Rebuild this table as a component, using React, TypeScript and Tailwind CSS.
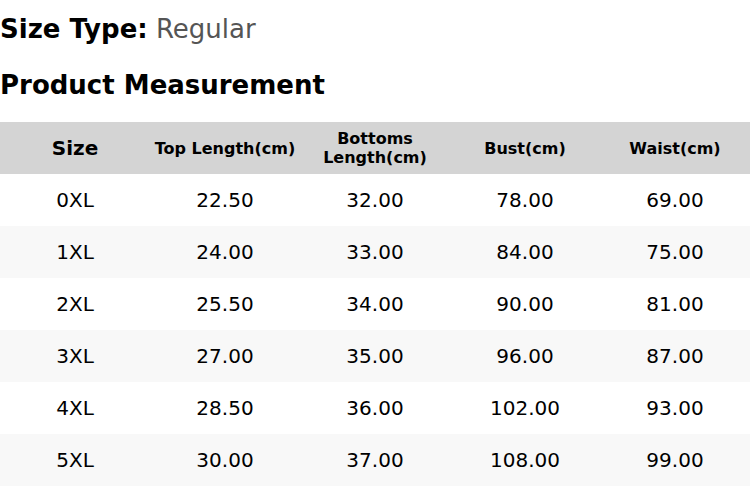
import React from "react";

const rows = [
    ["0XL", "22.50", "32.00", "78.00", "69.00"],
    ["1XL", "24.00", "33.00", "84.00", "75.00"],
    ["2XL", "25.50", "34.00", "90.00", "81.00"],
    ["3XL", "27.00", "35.00", "96.00", "87.00"],
    ["4XL", "28.50", "36.00", "102.00", "93.00"],
    ["5XL", "30.00", "37.00", "108.00", "99.00"],
];

export default function App() {
    return (
        <div className="w-[750px] h-[486px] overflow-hidden bg-white text-black font-['DejaVu_Sans',sans-serif]">
            <p className="mt-[14px] text-[26px] leading-[30px]">
                <span className="font-bold">Size Type:</span>{" "}
                <span className="text-[#555555]">Regular</span>
            </p>
            <h2 className="mt-[26px] text-[26px] leading-[30px] font-bold">Product Measurement</h2>

            <div className="mt-[22px] w-[750px]">
                {/* header */}
                <div className="grid grid-cols-5 h-[52px] bg-[#d4d4d4] items-center text-center font-bold">
                    <div className="text-[20px]">Size</div>
                    <div className="text-[16px] leading-[19px]">Top Length(cm)</div>
                    <div className="text-[16px] leading-[19px] px-4">Bottoms Length(cm)</div>
                    <div className="text-[16px] leading-[19px]">Bust(cm)</div>
                    <div className="text-[16px] leading-[19px]">Waist(cm)</div>
                </div>
                {rows.map((r, i) => (
                    <div
                        key={r[0]}
                        className={
                            "grid grid-cols-5 h-[52px] items-center text-center text-[20px] " +
                            (i % 2 === 1 ? "bg-[#f8f8f8]" : "bg-white")
                        }
                    >
                        {r.map((c, j) => (
                            <div key={j}>{c}</div>
                        ))}
                    </div>
                ))}
            </div>
        </div>
    );
}
